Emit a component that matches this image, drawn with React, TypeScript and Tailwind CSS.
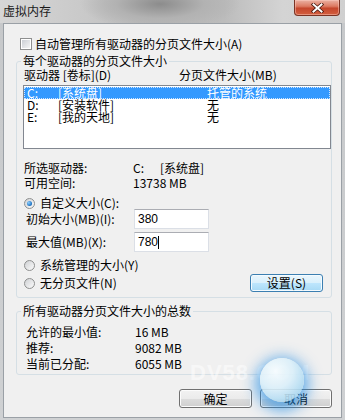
import React from "react";

const CloseButton = () => (
  <div className="mr-[5px] w-[46px] h-[16px] rounded-b-[4px] border border-t-0 border-[#7a3324] bg-[linear-gradient(180deg,#ebb2a4_0%,#dc7a62_42%,#c5472d_55%,#d35f3f_100%)] shadow-[inset_0_0_0_1px_rgba(255,210,200,0.45)] flex items-center justify-center">
    <svg width="13" height="10" viewBox="0 0 13 10">
      <path d="M2.5 1.5 L10.5 8.5 M10.5 1.5 L2.5 8.5" stroke="#4a1a10" strokeWidth="3.6" strokeLinecap="square" />
      <path d="M2.5 1.5 L10.5 8.5 M10.5 1.5 L2.5 8.5" stroke="#ffffff" strokeWidth="2" strokeLinecap="square" />
    </svg>
  </div>
);

const Checkbox = () => (
  <span className="w-[12px] h-[12px] shrink-0 border border-[#8e8f8f] bg-white p-[1px]">
    <span className="block w-full h-full bg-[linear-gradient(135deg,#cbcfd5,#f4f4f4)]" />
  </span>
);

const Radio = ({ checked = false }: { checked?: boolean }) => (
  <span className="w-[11px] h-[11px] shrink-0 rounded-full border border-[#8e8f8f] bg-[linear-gradient(135deg,#cfd1d4,#fbfbfb)] flex items-center justify-center">
    {checked && (
      <span className="w-[5px] h-[5px] rounded-full bg-[radial-gradient(circle_at_35%_35%,#8fd0ff,#1a6fc0_70%,#0d4f96)]" />
    )}
  </span>
);

const Button = ({ label, w, active = false }: { label: string; w: string; active?: boolean }) => (
  <div
    className={
      active
        ? `${w} h-[18px] rounded-[3px] border border-[#3c7fb1] bg-[linear-gradient(180deg,#eaf6fd_0%,#d9f0fc_50%,#bee6fd_50%,#a7d9f5_100%)] shadow-[inset_0_0_0_1px_#f4fbff] flex items-center justify-center leading-[14px]`
        : `${w} h-[19px] rounded-[3px] border border-[#707070] bg-[linear-gradient(180deg,#f2f2f2_0%,#ebebeb_50%,#dddddd_50%,#cfcfcf_100%)] shadow-[inset_0_0_0_1px_#fcfcfc] flex items-center justify-center leading-[14px]`
    }
  >
    {label}
  </div>
);

const SizeInput = ({ value, caret = false }: { value: string; caret?: boolean }) => (
  <div className="w-[75px] h-[20px] border border-[#dbdfe6] border-t-[#abadb3] bg-white flex items-center pl-[3px] font-['Liberation_Sans',sans-serif] text-[12px]">
    <span>{value}</span>
    {caret && <span className="w-[1px] h-[13px] bg-black" />}
  </div>
);

const drives = [
  { letter: "C:", label: "[系统盘]", size: "托管的系统", selected: true },
  { letter: "D:", label: "[安装软件]", size: "无", selected: false },
  { letter: "E:", label: "[我的天地]", size: "无", selected: false },
];

export default function App() {
  return (
    <div className="relative w-[345px] h-[420px] overflow-hidden flex flex-col bg-[linear-gradient(180deg,#c6c8ca,#cfd1d3)] font-['Noto_Sans_CJK_SC','Noto_Sans',sans-serif] text-[12px] text-black">
      {/* Title bar */}
      <div className="h-[23px] shrink-0 flex items-start justify-between bg-[radial-gradient(ellipse_80px_26px_at_160px_4px,#8c8c8c,#b2b2b2_55%,transparent_100%),linear-gradient(90deg,#d6d6d6_0%,#c9c9c9_25%,#b9b9b9_45%,#bcbcbc_65%,#d4d4d4_82%,#d0d0d0_100%)]">
        <div className="pl-[3px] pt-[4px] leading-[14px] text-[12px] text-[#1a1a1a]">虚拟内存</div>
        <CloseButton />
      </div>

      {/* Client area */}
      <div className="mx-[3px] h-[395px] border border-[#9aa0a6] bg-[#f0f0f0] flex flex-col">
        {/* Auto manage */}
        <div className="mt-[13px] pl-[16px] h-[14px] flex items-center gap-[3px] leading-[14px]">
          <Checkbox />
          <span>自动管理所有驱动器的分页文件大小(A)</span>
        </div>

        {/* Per-drive group */}
        <fieldset className="mt-[3px] ml-[12px] w-[316px] border border-[#d5dfe5] rounded-[3px] pb-[5px]">
          <legend className="ml-[4px] px-[2px] leading-[14px]">每个驱动器的分页文件大小</legend>

          <div className="h-[14px] flex pl-[7px] leading-[14px]">
            <span className="w-[155px]">驱动器 [卷标](D)</span>
            <span>分页文件大小(MB)</span>
          </div>

          <div className="mt-[3px] ml-[6px] w-[308px] h-[64px] border border-[#828790] bg-white pt-[1px]">
            {drives.map((d) => (
              <div
                key={d.letter}
                className={`h-[12px] flex pl-[3px] leading-[12px] ${
                  d.selected
                    ? "bg-[#3399ff] text-white outline-1 outline-dotted outline-[#cfe6ff] -outline-offset-1"
                    : ""
                }`}
              >
                <span className="w-[31px]">{d.letter}</span>
                <span className="w-[149px]">{d.label}</span>
                <span>{d.size}</span>
              </div>
            ))}
          </div>

          <div className="mt-[12px] h-[14px] flex pl-[7px] leading-[14px]">
            <span className="w-[109px]">所选驱动器:</span>
            <span className="w-[27px]">C:</span>
            <span>[系统盘]</span>
          </div>
          <div className="mt-[1px] h-[14px] flex pl-[7px] leading-[14px]">
            <span className="w-[109px]">可用空间:</span>
            <span>13738 MB</span>
          </div>

          <div className="mt-[7px] h-[12px] flex items-center gap-[5px] pl-[7px] leading-[14px]">
            <Radio checked />
            <span>自定义大小(C):</span>
          </div>
          <div className="h-[20px] flex items-center pl-[9px] leading-[14px]">
            <span className="w-[108px]">初始大小(MB)(I):</span>
            <SizeInput value="380" />
          </div>
          <div className="mt-[3px] h-[20px] flex items-center pl-[9px] leading-[14px]">
            <span className="w-[108px]">最大值(MB)(X):</span>
            <SizeInput value="780" caret />
          </div>

          <div className="mt-[7px] h-[12px] flex items-center gap-[5px] pl-[7px] leading-[14px]">
            <Radio />
            <span>系统管理的大小(Y)</span>
          </div>
          <div className="mt-[3px] h-[18px] flex items-center justify-between pl-[7px] pr-[8px] leading-[14px]">
            <div className="flex items-center gap-[5px]">
              <Radio />
              <span>无分页文件(N)</span>
            </div>
            <Button label="设置(S)" w="w-[73px]" active />
          </div>
        </fieldset>

        {/* Totals group */}
        <fieldset className="mt-[6px] ml-[12px] w-[316px] border border-[#d5dfe5] rounded-[3px] pb-[3px]">
          <legend className="ml-[4px] px-[2px] leading-[14px]">所有驱动器分页文件大小的总数</legend>
          <div className="mt-[7px] h-[14px] flex pl-[9px] leading-[14px]">
            <span className="w-[109px]">允许的最小值:</span>
            <span>16 MB</span>
          </div>
          <div className="mt-[2px] h-[14px] flex pl-[9px] leading-[14px]">
            <span className="w-[109px]">推荐:</span>
            <span>9082 MB</span>
          </div>
          <div className="mt-[2px] h-[14px] flex pl-[9px] leading-[14px]">
            <span className="w-[109px]">当前已分配:</span>
            <span>6055 MB</span>
          </div>
        </fieldset>

        {/* Dialog buttons */}
        <div className="mt-[14px] flex justify-end gap-[8px] pr-[9px]">
          <Button label="确定" w="w-[73px]" />
          <Button label="取消" w="w-[72px]" />
        </div>
      </div>

      {/* Watermark */}
      <div className="absolute left-[190px] top-[360px] font-['Liberation_Sans',sans-serif] font-bold text-[22px] leading-[26px] tracking-[1px] text-white opacity-50 pointer-events-none">
        DV58.COM
      </div>

      {/* Cursor glow */}
      <div className="absolute left-[260px] top-[358px] w-[44px] h-[44px] rounded-full opacity-90 bg-[radial-gradient(circle_at_35%_30%,#f6fcff_0%,#dcf0fa_40%,#a8d7f1_78%,#4aa8e6_100%)] shadow-[0_4px_14px_5px_rgba(30,140,230,0.7)] pointer-events-none" />
    </div>
  );
}
